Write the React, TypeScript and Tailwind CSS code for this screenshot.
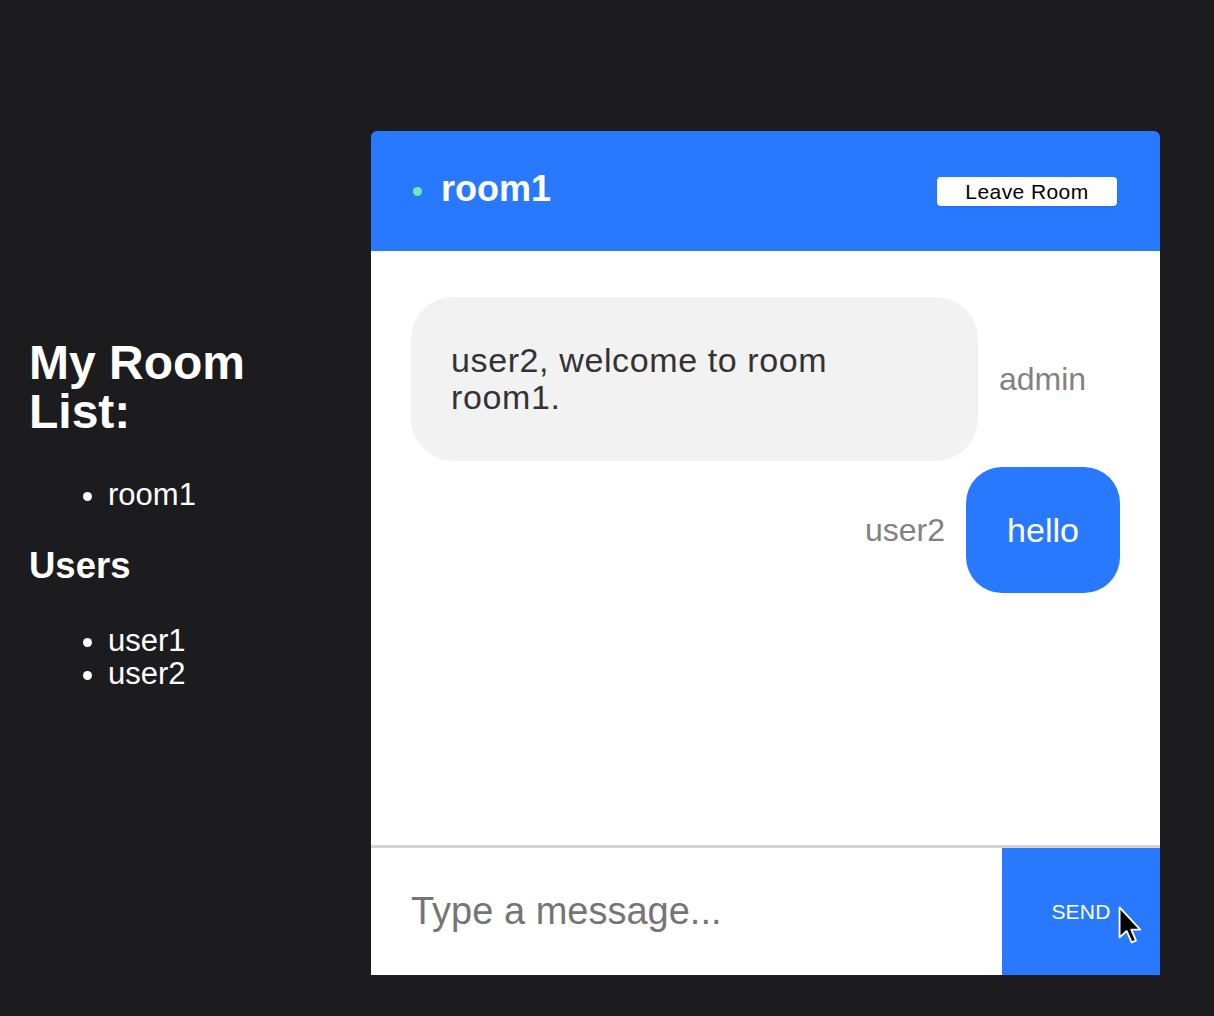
import React from "react";

const rooms = ["room1"];
const users = ["user1", "user2"];

const Cursor: React.FC = () => (
    <svg
        className="absolute left-[116px] top-[58px]"
        width="26"
        height="40"
        viewBox="0 0 18 28"
    >
        <path
            d="M1 1 L1 22 L6 17.5 L9.5 25.5 L12.5 24.2 L9.2 16.5 L15.5 16.5 Z"
            fill="#000"
            stroke="#fff"
            strokeWidth="1.3"
            strokeLinejoin="round"
        />
    </svg>
);

const App: React.FC = () => {
    return (
        <div className="min-h-screen bg-[#1c1c1e] flex font-['Liberation_Sans',Arial,sans-serif]">
            {/* sidebar */}
            <aside className="w-[371px] shrink-0 pl-[29px] pr-[60px] pt-[338px] text-white">
                <h1 className="text-[48px] leading-[49px] font-bold">My Room List:</h1>
                <ul className="list-disc pl-[79px] mt-[42px] text-[31px] leading-[33px]">
                    {rooms.map((r) => (
                        <li key={r}>{r}</li>
                    ))}
                </ul>
                <h2 className="mt-[35px] text-[36.5px] leading-[40px] font-bold">Users</h2>
                <ul className="list-disc pl-[79px] mt-[38px] text-[31px] leading-[33px]">
                    {users.map((u) => (
                        <li key={u}>{u}</li>
                    ))}
                </ul>
            </aside>

            {/* chat panel */}
            <div className="mt-[131px] w-[789px] h-[844px] flex flex-col rounded-t-md overflow-hidden">
                <header className="h-[120px] shrink-0 bg-[#2979ff] flex items-center pl-[42px] pr-[43px]">
                    <span className="w-[9px] h-[9px] rounded-full bg-[#69f0ae]" />
                    <h3 className="ml-[19px] -mt-[4px] text-white font-bold text-[36px] leading-none">room1</h3>
                    <button className="ml-auto w-[180px] h-[29px] bg-white rounded-[4px] shadow-sm text-black text-[21px] tracking-[0.02em] leading-none">
                        Leave Room
                    </button>
                </header>

                <div className="flex-1 bg-white pt-[46px] px-[40px]">
                    <div className="flex items-center gap-[21px]">
                        <div className="w-[567px] bg-[#f2f2f2] rounded-[42px] pl-[40px] pr-[40px] py-[45px] text-[#333] text-[34px] tracking-[0.018em] leading-[37px]">
                            user2, welcome to room
                            <br />
                            room1.
                        </div>
                        <span className="text-[#828282] text-[32px]">admin</span>
                    </div>
                    <div className="mt-[6px] flex items-center justify-end gap-[21px]">
                        <span className="text-[#828282] text-[32px]">user2</span>
                        <div className="w-[154px] h-[126px] bg-[#2979ff] rounded-[36px] flex items-center justify-center text-white text-[34px]">
                            hello
                        </div>
                    </div>
                </div>

                <form className="h-[130px] shrink-0 border-t-[3px] border-[#d3d3d3] bg-white flex">
                    <input
                        className="flex-1 min-w-0 pl-[40px] text-[38px] text-[#333] placeholder:text-[#757575] outline-none bg-white"
                        placeholder="Type a message..."
                    />
                    <button
                        type="button"
                        className="relative w-[158px] shrink-0 bg-[#2979ff] text-white text-[21px] tracking-[0.01em]"
                    >
                        SEND
                        <Cursor />
                    </button>
                </form>
            </div>
        </div>
    );
};

export default App;
